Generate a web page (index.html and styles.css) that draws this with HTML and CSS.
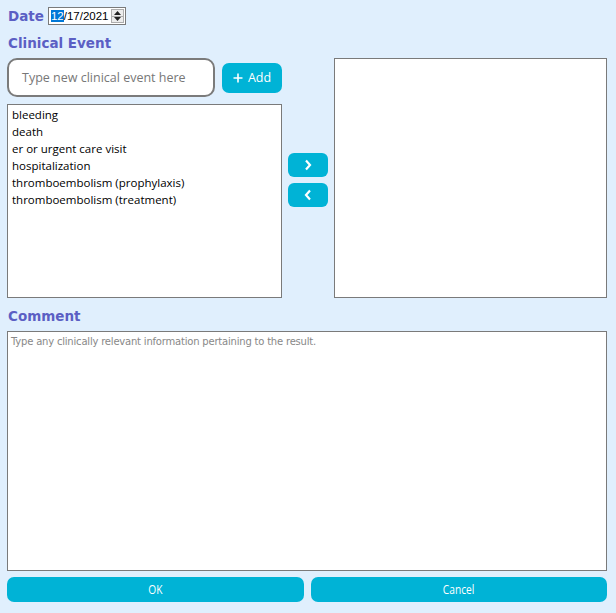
FILE: index.html
```html
<!DOCTYPE html>
<html>
<head>
<meta charset="utf-8">
<link rel="stylesheet" href="styles.css">
</head>
<body>
<div class="page">
  <div class="date-row">
    <span class="heading">Date</span>
    <div class="date-box">
      <span class="date-text"><span class="sel">12</span>/17/2021</span>
      <span class="spin">
        <span class="spin-btn"><svg width="7" height="4" viewBox="0 0 7 4"><path d="M0 4 L3.5 0 L7 4 Z" fill="#222"/></svg></span>
        <span class="spin-btn"><svg width="7" height="4" viewBox="0 0 7 4"><path d="M0 0 L3.5 4 L7 0 Z" fill="#222"/></svg></span>
      </span>
    </div>
  </div>
  <div class="heading section-title">Clinical Event</div>
  <div class="events">
    <div class="new-row">
      <div class="new-input">Type new clinical event here</div>
      <button class="btn add-btn"><svg width="10" height="10" viewBox="0 0 10 10"><path d="M5 0.5 V9.5 M0.5 5 H9.5" stroke="#fff" stroke-width="1.6"/></svg><span>Add</span></button>
    </div>
    <div class="list left-list">
      <div class="item">bleeding</div>
      <div class="item">death</div>
      <div class="item">er or urgent care visit</div>
      <div class="item">hospitalization</div>
      <div class="item">thromboembolism (prophylaxis)</div>
      <div class="item">thromboembolism (treatment)</div>
    </div>
    <div class="arrows">
      <button class="btn arrow-btn"><svg width="8" height="12" viewBox="0 0 8 12"><path d="M2 1.5 L6 6 L2 10.5" fill="none" stroke="#fff" stroke-width="2.2"/></svg></button>
      <button class="btn arrow-btn"><svg width="8" height="12" viewBox="0 0 8 12"><path d="M6 1.5 L2 6 L6 10.5" fill="none" stroke="#fff" stroke-width="2.2"/></svg></button>
    </div>
    <div class="list right-list"></div>
  </div>
  <div class="heading section-title comment-title">Comment</div>
  <div class="comment">Type any clinically relevant information pertaining to the result.</div>
  <div class="actions">
    <button class="btn action-btn"><span class="narrow">OK</span></button>
    <button class="btn action-btn"><span class="narrow">Cancel</span></button>
  </div>
</div>
</body>
</html>
```
FILE: styles.css
```css
html, body {
  margin: 0;
  padding: 0;
  background: #e0effd;
}
.page {
  width: 616px;
  height: 613px;
  box-sizing: border-box;
  padding: 6px 9px 0 7px;
  display: flex;
  flex-direction: column;
}
.heading {
  font-family: "DejaVu Sans", Verdana, sans-serif;
  font-weight: bold;
  font-size: 13.5px;
  color: #5b5fc4;
}
.date-row {
  display: flex;
  align-items: center;
  gap: 4px;
  padding-left: 1px;
  height: 20px;
}
.date-box {
  display: flex;
  align-items: center;
  justify-content: space-between;
  width: 78px;
  height: 18px;
  box-sizing: border-box;
  border: 1px solid #7a7a7a;
  background: #fff;
  padding: 0 1px 0 2px;
}
.date-text {
  font-family: "Liberation Sans", Arial, sans-serif;
  font-size: 11.5px;
  color: #000;
  line-height: 14px;
}
.sel {
  background: #0078d7;
  color: #fff;
}
.spin {
  display: flex;
  flex-direction: column;
  width: 13px;
  height: 14px;
  border: 1px solid #adadad;
  box-sizing: border-box;
}
.spin-btn {
  flex: 1;
  display: flex;
  align-items: center;
  justify-content: center;
  background: #ececec;
}
.spin-btn + .spin-btn {
  border-top: 1px solid #adadad;
}
.section-title {
  padding-left: 1px;
  margin-top: 8px;
  height: 18px;
  line-height: 18px;
}
.events {
  display: grid;
  grid-template-columns: 275px 52px 273px;
  grid-template-rows: auto 1fr;
  height: 240px;
  margin-top: 6px;
}
.new-row {
  grid-column: 1;
  grid-row: 1;
  display: flex;
  align-items: center;
  gap: 7px;
  margin-bottom: 7px;
}
.new-input {
  width: 208px;
  height: 39px;
  box-sizing: border-box;
  border: 2px solid #7b7b7b;
  border-radius: 10px;
  background: #fff;
  font-family: "Open Sans", sans-serif;
  font-size: 12.5px;
  color: #777;
  line-height: 35px;
  padding-left: 13px;
}
.btn {
  border: none;
  background: #00b3d6;
  color: #fff;
  margin: 0;
  padding: 0;
  cursor: pointer;
  display: flex;
  align-items: center;
  justify-content: center;
}
.add-btn {
  width: 60px;
  height: 30px;
  border-radius: 7px;
  gap: 5px;
  font-family: "Open Sans", sans-serif;
  font-size: 12.5px;
}
.list {
  background: #fff;
  border: 1px solid #7a7a7a;
  box-sizing: border-box;
}
.left-list {
  grid-column: 1;
  grid-row: 2;
  padding: 1px 4px;
}
.item {
  font-family: "Open Sans", sans-serif;
  font-size: 11.5px;
  line-height: 17px;
  color: #000;
}
.arrows {
  grid-column: 2;
  grid-row: 1 / 3;
  display: flex;
  flex-direction: column;
  align-items: center;
  justify-content: flex-start;
  gap: 6px;
  padding-top: 95px;
}
.arrow-btn {
  width: 40px;
  height: 24px;
  border-radius: 6px;
}
.right-list {
  grid-column: 3;
  grid-row: 1 / 3;
}
.comment-title {
  margin-top: 9px;
}
.comment {
  margin-top: 6px;
  height: 240px;
  box-sizing: border-box;
  border: 1px solid #7a7a7a;
  background: #fff;
  font-family: "DejaVu Sans", Tahoma, sans-serif;
  font-size: 10px;
  letter-spacing: -0.2px;
  color: #888;
  padding: 4px 3px;
}
.actions {
  display: grid;
  grid-template-columns: 1fr 1fr;
  gap: 7px;
  margin-top: 6px;
}
.action-btn {
  height: 25px;
  border-radius: 7px;
  font-family: "Open Sans", sans-serif;
  font-size: 12px;
}
.narrow {
  display: inline-block;
  transform: scaleX(0.85);
}
```
